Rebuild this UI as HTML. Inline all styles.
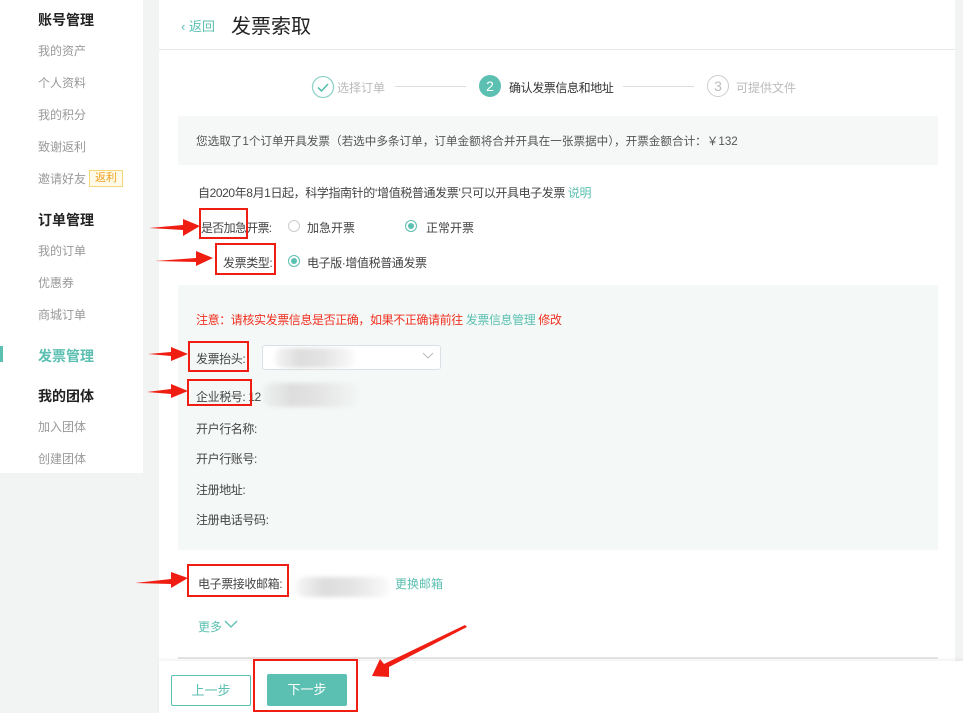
<!DOCTYPE html>
<html><head><meta charset="utf-8"><style>
*{margin:0;padding:0;box-sizing:border-box}
body{width:963px;height:713px;background:#f2f3f3;position:relative;overflow:hidden;font-family:"Liberation Sans","Noto Sans CJK SC",sans-serif;font-size:12px;color:#333}
.a{position:absolute;white-space:nowrap}
.side{left:0;top:0;width:143px;height:473px;background:#fff}
.h{font-size:14px;font-weight:bold;color:#222}
.s{color:#999;font-size:12px}
.teal{color:#5bbfb1}
.red{border:2px solid #f01d12}
.rad{width:12px;height:12px;border:1px solid #ccc;border-radius:50%;background:#fff}
.rad.on{border-color:#5bbfb1}
.rad.on::after{content:"";position:absolute;left:2px;top:2px;width:6px;height:6px;border-radius:50%;background:#5bbfb1}
.blur{background:linear-gradient(90deg,rgba(225,225,225,.3),#ddd 30%,#e4e4e4 60%,rgba(240,240,240,.3));border-radius:8px;filter:blur(2px)}
.lb{letter-spacing:-0.4px}
</style></head><body>
<div class="a side"></div>
<div class="a h" style="left:38px;top:10px">账号管理</div>
<div class="a s" style="left:38px;top:42px">我的资产</div>
<div class="a s" style="left:38px;top:74px">个人资料</div>
<div class="a s" style="left:38px;top:106px">我的积分</div>
<div class="a s" style="left:38px;top:138px">致谢返利</div>
<div class="a s" style="left:38px;top:170px">邀请好友</div>
<div class="a" style="left:89px;top:170px;width:34px;height:17px;border:1px solid #f5d77a;background:#fffbe8;color:#f0a020;font-size:11px;text-align:center;line-height:15px">返利</div>
<div class="a h" style="left:38px;top:210px">订单管理</div>
<div class="a s" style="left:38px;top:242px">我的订单</div>
<div class="a s" style="left:38px;top:274px">优惠券</div>
<div class="a s" style="left:38px;top:306px">商城订单</div>
<div class="a" style="left:0;top:346px;width:3px;height:16px;background:#5bbfb1"></div>
<div class="a h teal" style="left:38px;top:346px;color:#5bbfb1">发票管理</div>
<div class="a h" style="left:38px;top:386px">我的团体</div>
<div class="a s" style="left:38px;top:418px">加入团体</div>
<div class="a s" style="left:38px;top:450px">创建团体</div>

<div class="a" style="left:159px;top:0;width:796px;height:713px;background:#fff"></div>
<div class="a" style="left:159px;top:49px;width:796px;height:1px;background:#e6e6e6"></div>
<div class="a teal" style="left:181px;top:16px;font-size:13px">‹ 返回</div>
<div class="a" style="left:231px;top:10px;font-size:20px;color:#222">发票索取</div>

<svg class="a" style="left:311px;top:75px" width="24" height="24"><circle cx="12" cy="12" r="10.5" fill="none" stroke="#8fd3c9" stroke-width="1.3"/><path d="M7 12.5l3.5 3.5 6.5-7" fill="none" stroke="#5bbfb1" stroke-width="1.6"/></svg>
<div class="a" style="left:337px;top:79px;color:#bbb">选择订单</div>
<div class="a" style="left:395px;top:86px;width:71px;height:1px;background:#ddd"></div>
<div class="a" style="left:479px;top:75px;width:22px;height:22px;border-radius:50%;background:#5bbfb1;color:#fff;font-size:14px;text-align:center;line-height:22px">2</div>
<div class="a lb" style="left:509px;top:79px;color:#333">确认发票信息和地址</div>
<div class="a" style="left:623px;top:86px;width:71px;height:1px;background:#ddd"></div>
<div class="a" style="left:707px;top:75px;width:22px;height:22px;border-radius:50%;border:1px solid #ccc;color:#bbb;font-size:14px;text-align:center;line-height:20px">3</div>
<div class="a" style="left:736px;top:79px;color:#bbb">可提供文件</div>

<div class="a" style="left:178px;top:116px;width:760px;height:49px;background:#f6f8f8"></div>
<div class="a" style="left:196px;top:133px;color:#555;font-size:11.6px">您选取了1个订单开具发票（若选中多条订单，订单金额将合并开具在一张票据中），开票金额合计：￥132</div>
<div class="a lb" style="left:198px;top:184px;color:#444">自2020年8月1日起，科学指南针的‘增值税普通发票’只可以开具电子发票 <span class="teal">说明</span></div>

<div class="a" style="left:201px;top:219px;color:#444;letter-spacing:-0.7px">是否加急开票:</div>
<div class="a rad" style="left:288px;top:220px"></div>
<div class="a" style="left:307px;top:219px;color:#444">加急开票</div>
<div class="a rad on" style="left:405px;top:220px"></div>
<div class="a" style="left:426px;top:219px;color:#444">正常开票</div>
<div class="a lb" style="left:223px;top:254px;color:#444">发票类型:</div>
<div class="a rad on" style="left:288px;top:255px"></div>
<div class="a lb" style="left:307px;top:254px;color:#444">电子版·增值税普通发票</div>

<div class="a" style="left:178px;top:285px;width:760px;height:265px;background:#f4f9f7"></div>
<div class="a lb" style="left:196px;top:311px;color:#f03020">注意：请核实发票信息是否正确，如果不正确请前往 <span class="teal">发票信息管理</span> 修改</div>
<div class="a lb" style="left:196px;top:350px;color:#444">发票抬头:</div>
<div class="a" style="left:262px;top:345px;width:179px;height:25px;border:1px solid #dcdfe6;border-radius:3px;background:#fff"></div>
<div class="a blur" style="left:275px;top:348px;width:80px;height:20px"></div>
<svg class="a" style="left:422px;top:352px" width="12" height="8"><path d="M1 1l5 5 5-5" fill="none" stroke="#bbb"/></svg>
<div class="a lb" style="left:196px;top:388px;color:#444">企业税号:&nbsp;12</div>
<div class="a blur" style="left:263px;top:383px;width:95px;height:24px"></div>
<div class="a lb" style="left:196px;top:420px;color:#444">开户行名称:</div>
<div class="a lb" style="left:196px;top:450px;color:#444">开户行账号:</div>
<div class="a lb" style="left:196px;top:481px;color:#444">注册地址:</div>
<div class="a lb" style="left:196px;top:511px;color:#444">注册电话号码:</div>

<div class="a lb" style="left:198px;top:575px;color:#444">电子票接收邮箱:</div>
<div class="a blur" style="left:296px;top:577px;width:94px;height:20px"></div>
<div class="a teal" style="left:395px;top:575px">更换邮箱</div>
<div class="a teal" style="left:198px;top:618px">更多</div>
<svg class="a" style="left:224px;top:620px" width="14" height="9"><path d="M1 1l6 6 6-6" fill="none" stroke="#5bbfb1" stroke-width="1.3"/></svg>
<div class="a" style="left:178px;top:657px;width:760px;height:2px;background:#e4e4e4"></div>
<div class="a" style="left:159px;top:661px;width:804px;height:52px;background:#fff;box-shadow:0 -2px 3px rgba(0,0,0,.05)"></div>
<div class="a" style="left:171px;top:675px;width:80px;height:31px;border:1px solid #5bbfb1;border-radius:2px;color:#5bbfb1;text-align:center;line-height:29px;font-size:13px">上一步</div>
<div class="a" style="left:267px;top:674px;width:80px;height:32px;background:#5bbfb1;border-radius:2px;color:#fff;text-align:center;line-height:32px;font-size:13px">下一步</div>

<div class="a red" style="left:199px;top:208px;width:49px;height:31px"></div>
<div class="a red" style="left:215px;top:243px;width:61px;height:32px"></div>
<div class="a red" style="left:188px;top:341px;width:61px;height:31px"></div>
<div class="a red" style="left:187px;top:379px;width:65px;height:27px"></div>
<div class="a red" style="left:187px;top:564px;width:102px;height:33px"></div>
<div class="a red" style="left:253px;top:659px;width:105px;height:53px"></div>

<svg class="a" style="left:0;top:0" width="963" height="713">
<g fill="#f01d12">
<polygon points="149,228 183,225 183,219 200,226 183,236 183,230"/>
<polygon points="155,261 196,258 196,251 213,258 196,266 196,262"/>
<polygon points="148,354 171,352 171,347 188,354 171,361 171,356"/>
<polygon points="147,392 171,389 171,384 188,391 171,398 171,394"/>
<polygon points="135,583 171,579 171,572 188,578 171,588 171,584"/>
<polygon points="465,625 467,627 389,667 389,677 372,676 380,659 384,664"/>
</g></svg>
</body></html>
